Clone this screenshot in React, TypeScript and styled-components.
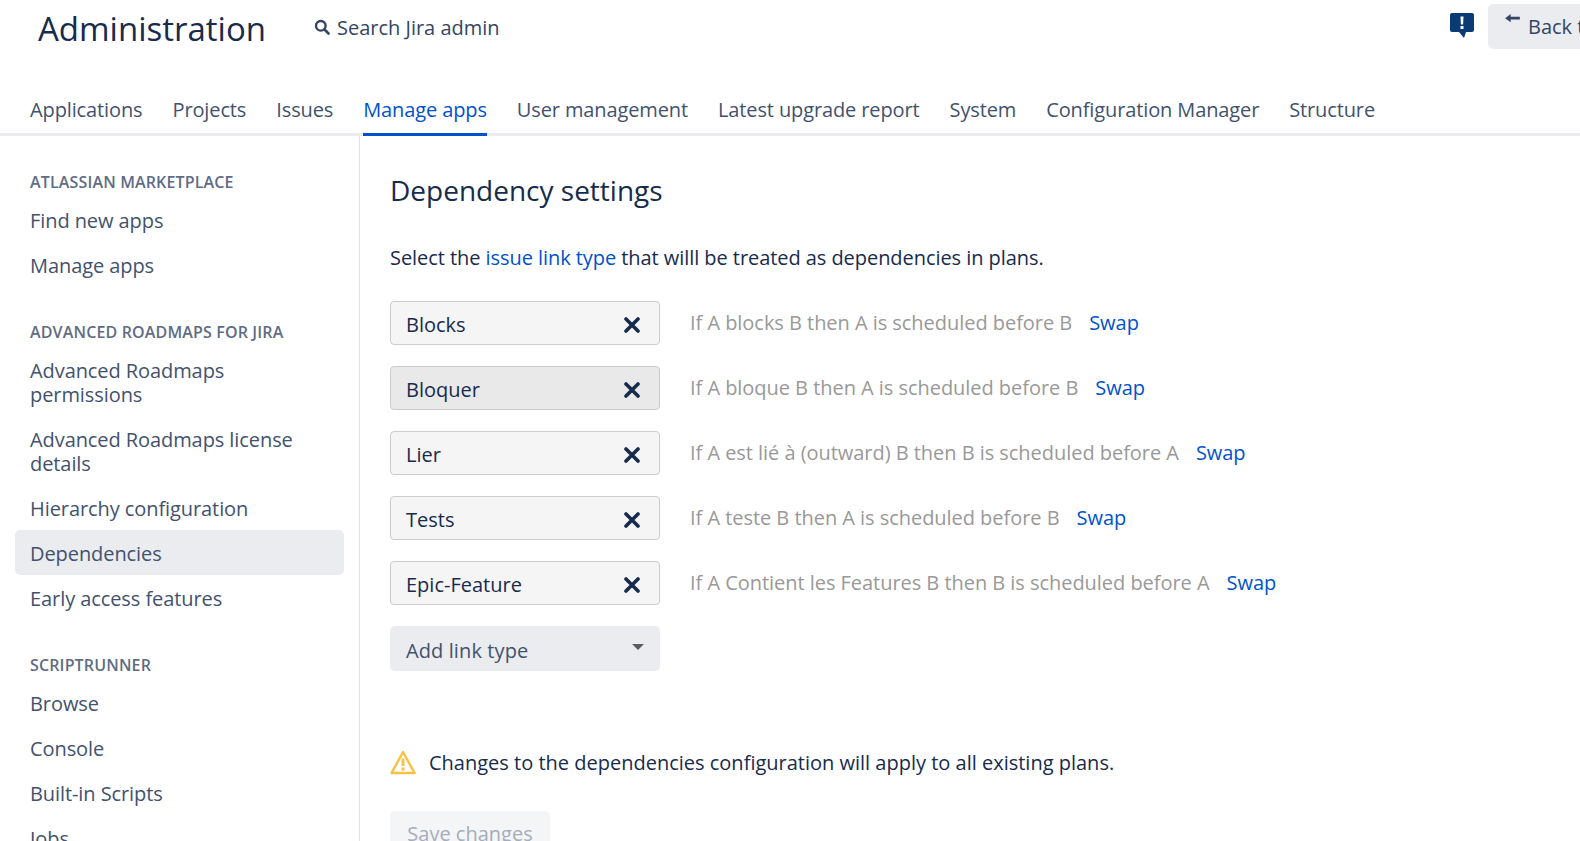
import styled, { createGlobalStyle } from "styled-components";

const GlobalStyle = createGlobalStyle`
  html, body {
    margin: 0;
    height: 100%;
    overflow: hidden;
    background: #fff;
    font-family: "Open Sans", "Noto Sans", sans-serif;
    color: #172b4d;
  }
`;

const Page = styled.div`
  width: 1580px;
  height: 841px;
  overflow: hidden;
`;

const Header = styled.header`
  height: 136px;
  box-sizing: border-box;
  border-bottom: 3px solid #ebecf0;
  display: flex;
  flex-direction: column;
`;

const TopBar = styled.div`
  flex: none;
  height: 94px;
  display: flex;
  align-items: flex-start;
  padding-left: 38px;
`;

const PageTitle = styled.h1`
  margin: 6px 0 0;
  font-size: 33px;
  line-height: 46px;
  font-weight: 400;
  width: 276px;
`;

const Search = styled.div`
  display: flex;
  align-items: center;
  gap: 7px;
  height: 28px;
  margin-top: 13px;
  font-size: 20px;
  color: #344563;
`;

const TopRight = styled.div`
  margin-left: auto;
  display: flex;
  align-items: flex-start;
  gap: 13px;
  padding-top: 4px;
`;

const FeedbackIcon = styled.svg`
  width: 26px;
  height: 28px;
  margin-top: 8px;
`;

const BackButton = styled.div`
  width: 92px;
  height: 45px;
  border-radius: 5px 0 0 5px;
  background: #ebecf0;
  color: #344563;
  font-size: 20px;
  display: flex;
  align-items: center;
  gap: 8px;
  padding-left: 17px;
  box-sizing: border-box;
  white-space: nowrap;
  overflow: hidden;

  svg {
    flex: none;
    margin-top: -14px;
  }
`;

const Tabs = styled.nav`
  flex: none;
  display: flex;
  gap: 30px;
  padding-left: 30px;
`;

const Tab = styled.a<{ $active?: boolean }>`
  height: 42px;
  padding-top: 2px;
  box-sizing: border-box;
  font-size: 20px;
  line-height: 28px;
  letter-spacing: -0.12px;
  white-space: nowrap;
  color: ${(p) => (p.$active ? "#0052cc" : "#42526e")};
  border-bottom: 3px solid ${(p) => (p.$active ? "#0052cc" : "transparent")};
`;

const Body = styled.div`
  display: flex;
  height: 705px;
`;

const Sidebar = styled.aside`
  width: 360px;
  flex: none;
  box-sizing: border-box;
  border-right: 1px solid #dfe1e6;
  padding: 34px 15px 0;
`;

const GroupTitle = styled.div`
  font-size: 16px;
  line-height: 24px;
  font-weight: 600;
  letter-spacing: 0.15px;
  color: #5e6c84;
  padding-left: 15px;
  margin: 0 0 2.5px;
`;

const Group = styled.div`
  margin-bottom: 33.5px;
`;

const NavItem = styled.div<{ $active?: boolean }>`
  padding: 12px 15px 9px;
  font-size: 20px;
  line-height: 24px;
  letter-spacing: -0.08px;
  color: #42526e;
  border-radius: 5px;
  background: ${(p) => (p.$active ? "#ebecf0" : "transparent")};
`;

const Main = styled.main`
  flex: 1;
  padding: 34px 30px 0;
`;

const Heading = styled.h2`
  margin: 0;
  font-size: 28px;
  line-height: 40px;
  font-weight: 400;
`;

const Intro = styled.p`
  margin: 34px 0 29px;
  font-size: 20px;
  line-height: 28px;
  letter-spacing: -0.06px;
`;

const TextLink = styled.a`
  color: #0052cc;
`;

const LinkRow = styled.div`
  display: flex;
  align-items: flex-start;
  gap: 30px;
  height: 65px;
`;

const Chip = styled.div<{ $hover?: boolean }>`
  width: 270px;
  height: 44px;
  box-sizing: border-box;
  border: 1px solid #ccc;
  border-radius: 4px;
  background: ${(p) => (p.$hover ? "#e9e9e9" : "#f5f5f5")};
  display: flex;
  align-items: center;
  justify-content: space-between;
  padding: 3px 19px 0 15px;
  font-size: 20px;
`;

const Explain = styled.div`
  display: flex;
  gap: 17px;
  height: 44px;
  align-items: center;
  margin-top: -1px;
  font-size: 20px;
  letter-spacing: -0.04px;
  color: #999;
  white-space: nowrap;
`;

const AddSelect = styled.div`
  width: 270px;
  height: 45px;
  box-sizing: border-box;
  border-radius: 5px;
  background: #ebecf0;
  display: flex;
  align-items: center;
  justify-content: space-between;
  padding: 4px 16px 0;
  font-size: 20px;
  letter-spacing: 0.1px;
  color: #42526e;
`;

const Caret = styled.span`
  width: 0;
  height: 0;
  border: 6px solid transparent;
  border-top: 6px solid #5c5c5c;
  border-bottom: 0;
  margin-top: -8px;
`;

const Warning = styled.div`
  display: flex;
  align-items: center;
  gap: 13px;
  margin-top: 71px;
  height: 40px;
  font-size: 20px;
`;

const SaveButton = styled.div`
  width: 160px;
  height: 45px;
  margin-top: 29px;
  border-radius: 5px;
  background: #f4f5f7;
  color: #a5adba;
  font-size: 20px;
  display: flex;
  align-items: center;
  justify-content: center;
`;

const links = [
  { name: "Blocks", text: "If A blocks B then A is scheduled before B" },
  { name: "Bloquer", text: "If A bloque B then A is scheduled before B", hover: true },
  { name: "Lier", text: "If A est lié à (outward) B then B is scheduled before A" },
  { name: "Tests", text: "If A teste B then A is scheduled before B" },
  { name: "Epic-Feature", text: "If A Contient les Features B then B is scheduled before A" },
];

const tabs = ["Applications", "Projects", "Issues", "Manage apps", "User management", "Latest upgrade report", "System", "Configuration Manager", "Structure"];

const groups = [
  { title: "ATLASSIAN MARKETPLACE", items: ["Find new apps", "Manage apps"] },
  {
    title: "ADVANCED ROADMAPS FOR JIRA",
    items: ["Advanced Roadmaps permissions", "Advanced Roadmaps license details", "Hierarchy configuration", "Dependencies", "Early access features"],
  },
  { title: "SCRIPTRUNNER", items: ["Browse", "Console", "Built-in Scripts", "Jobs"] },
];

function CloseIcon() {
  return (
    <svg width="16" height="16" viewBox="0 0 16 16">
      <path d="M2 2l12 12M14 2L2 14" stroke="#172b4d" strokeWidth="3.6" strokeLinecap="round" />
    </svg>
  );
}

export default function App() {
  return (
    <Page>
      <GlobalStyle />
      <Header>
        <TopBar>
          <PageTitle>Administration</PageTitle>
          <Search>
            <svg width="16" height="16" viewBox="0 0 16 16">
              <circle cx="6.8" cy="6.8" r="4.8" fill="none" stroke="#344563" strokeWidth="2.4" />
              <path d="M10.5 10.5l4 4" stroke="#344563" strokeWidth="2.6" strokeLinecap="round" />
            </svg>
            Search Jira admin
          </Search>
          <TopRight>
            <FeedbackIcon viewBox="0 0 26 28">
              <path d="M3 1h20a2 2 0 0 1 2 2v15a2 2 0 0 1-2 2h-6l-2 6-5-6H3a2 2 0 0 1-2-2V3a2 2 0 0 1 2-2z" fill="#0a3b75" />
              <path d="M11.5 4.5h3l-.4 8h-2.2zM11.5 14h3v3h-3z" fill="#fff" />
            </FeedbackIcon>
            <BackButton>
              <svg width="15" height="11" viewBox="0 0 16 12">
                <path d="M0 4.5L6 0v3h10v3H6v3z" fill="#344563" />
              </svg>
              Back to Jira
            </BackButton>
          </TopRight>
        </TopBar>
        <Tabs>
          {tabs.map((t) => (
            <Tab key={t} $active={t === "Manage apps"}>
              {t}
            </Tab>
          ))}
        </Tabs>
      </Header>
      <Body>
        <Sidebar>
          {groups.map((g) => (
            <Group key={g.title}>
              <GroupTitle>{g.title}</GroupTitle>
              {g.items.map((i) => (
                <NavItem key={i} $active={i === "Dependencies"}>
                  {i}
                </NavItem>
              ))}
            </Group>
          ))}
        </Sidebar>
        <Main>
          <Heading>Dependency settings</Heading>
          <Intro>
            Select the <TextLink>issue link type</TextLink> that willl be treated as dependencies in plans.
          </Intro>
          {links.map((l) => (
            <LinkRow key={l.name}>
              <Chip $hover={l.hover}>
                {l.name}
                <CloseIcon />
              </Chip>
              <Explain>
                {l.text}
                <TextLink>Swap</TextLink>
              </Explain>
            </LinkRow>
          ))}
          <AddSelect>
            Add link type
            <Caret />
          </AddSelect>
          <Warning>
            <svg width="26" height="25" viewBox="0 0 26 25">
              <path d="M13 2L1.5 23h23z" fill="none" stroke="#f6c244" strokeWidth="2.4" strokeLinejoin="round" />
              <path d="M11.5 8.5h3v7.5h-3zM11.5 17.5h3v3h-3z" fill="#f6c244" />
            </svg>
            Changes to the dependencies configuration will apply to all existing plans.
          </Warning>
          <SaveButton>Save changes</SaveButton>
        </Main>
      </Body>
    </Page>
  );
}
